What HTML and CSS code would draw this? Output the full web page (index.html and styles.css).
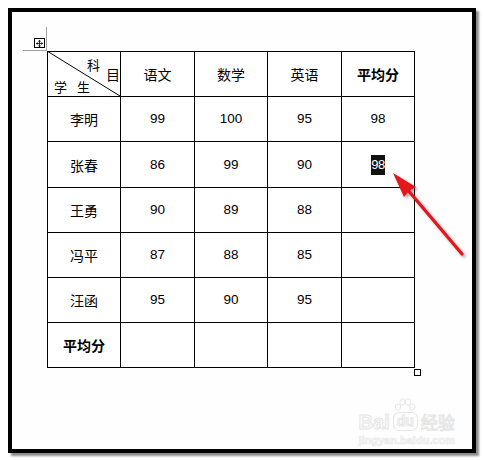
FILE: index.html
```html
<!DOCTYPE html>
<html lang="zh">
<head>
<meta charset="utf-8">
<title>成绩表</title>
<link rel="stylesheet" href="styles.css">
</head>
<body>
<div class="frame">
  <div class="table-wrap">
    <span class="guide-v"></span>
    <span class="guide-h"></span>
    <span class="move-handle">
      <svg width="9" height="9" viewBox="0 0 9 9">
        <path d="M4.5 0.5 V8.5 M0.5 4.5 H8.5" stroke="#000" stroke-width="1" fill="none"/>
        <path d="M4.5 0 L2.5 2 H6.5 Z M4.5 9 L2.5 7 H6.5 Z M0 4.5 L2 2.5 V6.5 Z M9 4.5 L7 2.5 V6.5 Z" fill="#000"/>
      </svg>
    </span>
    <div class="grid">
      <div class="cell diag">
        <svg class="diag-line" width="72" height="44" viewBox="0 0 72 44" preserveAspectRatio="none">
          <line x1="-1" y1="-1" x2="72" y2="44" stroke="#000" stroke-width="1"/>
        </svg>
        <span class="dg dg-ke">科</span>
        <span class="dg dg-mu">目</span>
        <span class="dg dg-xue">学</span>
        <span class="dg dg-sheng">生</span>
      </div>
      <div class="cell">语文</div>
      <div class="cell">数学</div>
      <div class="cell">英语</div>
      <div class="cell bold">平均分</div>

      <div class="cell">李明</div>
      <div class="cell num">99</div>
      <div class="cell num">100</div>
      <div class="cell num">95</div>
      <div class="cell num">98</div>

      <div class="cell">张春</div>
      <div class="cell num">86</div>
      <div class="cell num">99</div>
      <div class="cell num">90</div>
      <div class="cell num"><span class="selected">98</span></div>

      <div class="cell">王勇</div>
      <div class="cell num">90</div>
      <div class="cell num">89</div>
      <div class="cell num">88</div>
      <div class="cell"></div>

      <div class="cell">冯平</div>
      <div class="cell num">87</div>
      <div class="cell num">88</div>
      <div class="cell num">85</div>
      <div class="cell"></div>

      <div class="cell">汪函</div>
      <div class="cell num">95</div>
      <div class="cell num">90</div>
      <div class="cell num">95</div>
      <div class="cell"></div>

      <div class="cell bold">平均分</div>
      <div class="cell"></div>
      <div class="cell"></div>
      <div class="cell"></div>
      <div class="cell"></div>
    </div>
    <span class="resize-handle"></span>
  </div>
  <div class="watermark">
    <div class="wm-row">
      <span class="wm-bai">Bai</span>
      <span class="wm-du">
        <svg class="wm-paw" width="22" height="14" viewBox="0 0 22 14">
          <ellipse cx="4" cy="9" rx="2.6" ry="3.2" fill="#fff" stroke="#e6e6e6"/>
          <ellipse cx="8.5" cy="4" rx="2.6" ry="3.2" fill="#fff" stroke="#e6e6e6"/>
          <ellipse cx="14" cy="4" rx="2.6" ry="3.2" fill="#fff" stroke="#e6e6e6"/>
          <ellipse cx="18.5" cy="9" rx="2.6" ry="3.2" fill="#fff" stroke="#e6e6e6"/>
        </svg>
        <span class="wm-du-text">du</span>
      </span>
      <span class="wm-jy">经验</span>
    </div>
    <div class="wm-url">jingyan.baidu.com</div>
  </div>
</div>
<svg class="arrow" width="483" height="460" viewBox="0 0 483 460">
  <g class="arrow-g">
    <line x1="462" y1="254" x2="407" y2="189" stroke="#e5161c" stroke-width="3.2" stroke-linecap="round"/>
    <path d="M393 173 L416 187 L409 191 L404 197 Z" fill="#e5161c"/>
  </g>
</svg>
</body>
</html>
```

FILE: styles.css
```css
html, body {
  margin: 0;
  padding: 0;
  background: #ffffff;
}

body {
  position: relative;
  width: 483px;
  height: 460px;
  font-family: "Noto Sans CJK SC", "Noto Sans", sans-serif;
  color: #000;
}

.frame {
  position: relative;
  margin: 8px 0 0 8px;
  width: 468px;
  height: 445px;
  box-sizing: border-box;
  border: 4px solid #000;
  background: #fefefe;
  box-shadow: 3px 3px 2px #8a8a8a;
  padding: 39px 0 0 35px;
}

.table-wrap {
  position: relative;
  width: 368px;
}

.guide-v {
  position: absolute;
  left: -1px;
  top: -24px;
  width: 1px;
  height: 24px;
  background: #a0a0a0;
}

.guide-h {
  position: absolute;
  left: -24px;
  top: -1px;
  width: 24px;
  height: 1px;
  background: #a0a0a0;
}

.move-handle {
  position: absolute;
  left: -13px;
  top: -13px;
  width: 11px;
  height: 10px;
  box-sizing: border-box;
  border: 1px solid #000;
  background: #fff;
  display: flex;
  align-items: center;
  justify-content: center;
}

.move-handle svg {
  display: block;
  width: 7px;
  height: 7px;
}

.grid {
  display: grid;
  grid-template-columns: 72px 73px 72px 73px 72px;
  grid-template-rows: 44px 44px 45px 44px 44px 44px 44px;
  gap: 1px;
  padding: 1px;
  background: #000;
}

.cell {
  background: #fff;
  display: flex;
  align-items: center;
  justify-content: center;
  font-size: 14px;
  line-height: 16px;
}

.cell.bold {
  font-weight: 700;
}

.cell.num {
  font-family: "Liberation Sans", Arial, sans-serif;
  font-size: 13.5px;
}

.selected {
  display: inline-block;
  background: #111;
  color: #fff;
  width: 14px;
  height: 20px;
  line-height: 20px;
  text-align: center;
  font-size: 13px;
  letter-spacing: -0.5px;
}

.cell.diag {
  position: relative;
  display: block;
}

.diag-line {
  position: absolute;
  left: 0;
  top: 0;
}

.dg {
  position: absolute;
  font-size: 13px;
  line-height: 13px;
}

.dg-ke { left: 39px; top: 6px; }
.dg-mu { left: 58px; top: 16px; font-size: 14px; }
.dg-xue { left: 6px; top: 28px; }
.dg-sheng { left: 29px; top: 28px; }

.resize-handle {
  position: absolute;
  left: 367px;
  top: 318px;
  width: 7px;
  height: 7px;
  box-sizing: border-box;
  border: 1px solid #000;
  background: #fff;
}

.watermark {
  position: absolute;
  right: 17px;
  bottom: 2px;
  display: flex;
  flex-direction: column;
  align-items: center;
  color: #fafafa;
}

.wm-row {
  display: flex;
  align-items: flex-end;
  gap: 3px;
}

.wm-bai {
  font-family: "Liberation Sans", Arial, sans-serif;
  font-weight: 700;
  font-size: 20px;
  line-height: 18px;
  -webkit-text-stroke: 1px #e6e6e6;
}

.wm-du {
  display: flex;
  flex-direction: column;
  align-items: center;
}

.wm-paw {
  display: block;
}

.wm-du-text {
  font-family: "Liberation Sans", Arial, sans-serif;
  font-weight: 700;
  font-size: 14px;
  line-height: 14px;
  padding: 1px 3px 2px;
  border: 1px solid #e6e6e6;
  border-radius: 6px;
  -webkit-text-stroke: 1px #e6e6e6;
}

.wm-jy {
  font-size: 17px;
  line-height: 18px;
  -webkit-text-stroke: 1px #e6e6e6;
}

.wm-url {
  font-family: "Liberation Sans", Arial, sans-serif;
  font-weight: 700;
  font-size: 11px;
  line-height: 13px;
  margin-top: 3px;
  color: #f7f7f7;
  -webkit-text-stroke: 0.6px #e8e8e8;
}

.arrow {
  position: absolute;
  left: 0;
  top: 0;
  pointer-events: none;
}

.arrow-g {
  filter: drop-shadow(2px 2px 1.5px rgba(0, 0, 0, 0.35));
}
```
